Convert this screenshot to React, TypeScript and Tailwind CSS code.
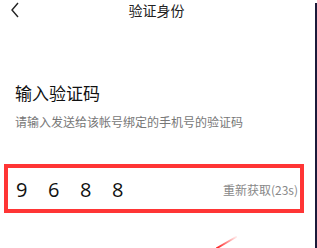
export default function App() {
  const digits = ["9", "6", "8", "8"];
  return (
    <div
      className="relative h-[248px] w-[317px] overflow-hidden bg-white"
      style={{ fontFamily: '"Noto Sans CJK SC", "Noto Sans", sans-serif' }}
    >
      {/* right edge strip */}
      <div className="absolute right-0 top-[3px] bottom-0 w-[2px] bg-[#1b1b3a]" />

      {/* Header */}
      <div className="relative flex h-[20px] items-center justify-center">
        <svg className="absolute left-[10px] top-[2px]" width="10" height="16" viewBox="0 0 10 16">
          <path d="M8 1 L2 8 L8 15" fill="none" stroke="#222" strokeWidth="1.4" />
        </svg>
        <span className="ml-[-4px] text-[14px] leading-none text-[#222]">验证身份</span>
      </div>

      {/* Title */}
      <div className="mt-[63px] px-[15px]">
        <div className="text-[17px] leading-[20px] text-[#111]">输入验证码</div>
        <div className="mt-[12px] text-[12px] leading-[14px] text-[#777]">
          请输入发送给该帐号绑定的手机号的验证码
        </div>
      </div>

      {/* Code input */}
      <div className="ml-[4px] mt-[35px] flex h-[49px] w-[300px] items-center justify-between border-[4px] border-[#ff3535] pl-[8px] pr-[2px]">
        <div className="flex gap-[21px] pt-[2px]" style={{ fontFamily: '"Open Sans", "Noto Sans", sans-serif' }}>
          {digits.map((d, i) => (
            <span key={i} className="w-[11px] text-[20px] leading-none text-[#111]">
              {d}
            </span>
          ))}
        </div>
        <span className="pt-[2px] text-[12px] leading-none text-[#888]">重新获取(23s)</span>
      </div>

      {/* stray arrow stroke */}
      <svg className="absolute left-[214px] top-[234px]" width="24" height="14" viewBox="0 0 24 14">
        <defs>
          <linearGradient id="g" x1="0" y1="1" x2="1" y2="0">
            <stop offset="0" stopColor="#ff2020" />
            <stop offset="1" stopColor="#ff2020" stopOpacity="0.1" />
          </linearGradient>
        </defs>
        <path d="M3 14 L22 3" stroke="url(#g)" strokeWidth="2" strokeLinecap="round" />
      </svg>
    </div>
  );
}
